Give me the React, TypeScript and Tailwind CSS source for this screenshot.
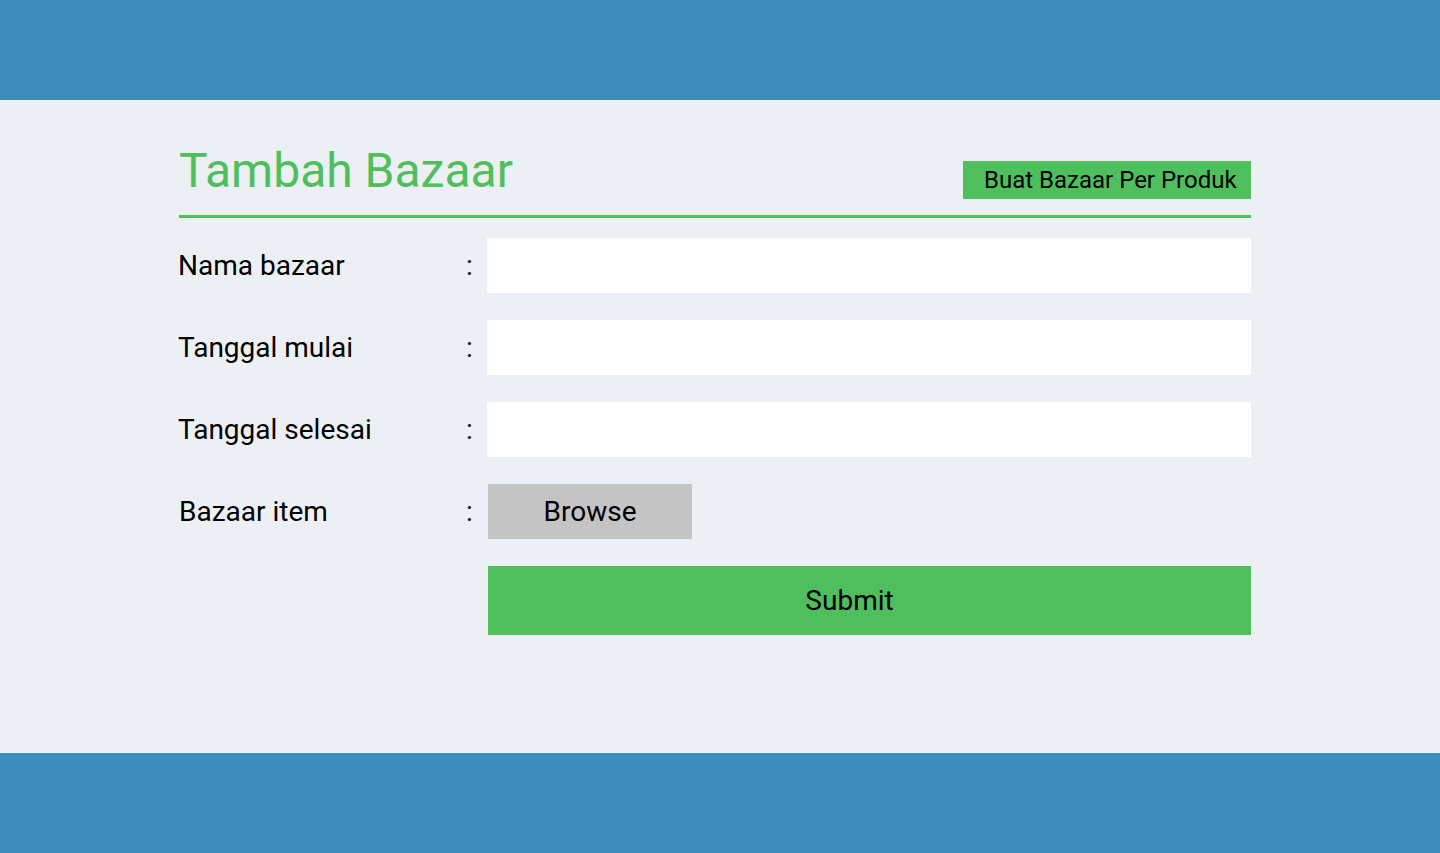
import { useState } from "react";

const rows = [
  { label: "Nama bazaar", name: "nama" },
  { label: "Tanggal mulai", name: "mulai" },
  { label: "Tanggal selesai", name: "selesai" },
];

export default function App() {
  const [values, setValues] = useState<Record<string, string>>({});

  return (
    <div className="flex min-h-[853px] flex-col bg-[#ecf0f5] font-['Roboto',sans-serif] text-black">
      <div className="h-[100px] bg-[#3c8dbc]" />

      <main className="h-[653px] pt-[47px]">
        <div className="ml-[179px] w-[1072px]">
          <div className="flex h-[71px] items-start justify-between border-b-[3px] border-[#4fbe5c]">
            <h1 className="text-[48px] leading-[48px] text-[#4fbe5c]">Tambah Bazaar</h1>
            <button className="mt-[14px] h-[38px] w-[288px] bg-[#4fbe5c] pl-[21px] text-left text-[24px] leading-[38px]">
              Buat Bazaar Per Produk
            </button>
          </div>

          <div className="mt-[20px] flex flex-col gap-[27px]">
            {rows.map((r) => (
              <div key={r.name} className="flex h-[55px] items-center text-[28px]">
                <label className="-ml-px w-[288px]">{r.label}</label>
                <span className="w-[21px]">:</span>
                <input
                  className="h-[55px] flex-1 bg-white px-3 outline-none"
                  value={values[r.name] ?? ""}
                  onChange={(e) => setValues({ ...values, [r.name]: e.target.value })}
                />
              </div>
            ))}

            <div className="flex h-[55px] items-center text-[28px]">
              <label className="w-[287px]">Bazaar item</label>
              <span className="w-[21px]">:</span>
              <button className="ml-px h-[55px] w-[204px] bg-[#c4c4c4]">Browse</button>
            </div>

            <div className="flex">
              <button className="ml-[309px] h-[69px] w-[764px] bg-[#4fbe5c] pr-[40px] text-[28px]">Submit</button>
            </div>
          </div>
        </div>
      </main>

      <div className="h-[100px] bg-[#3c8dbc]" />
    </div>
  );
}
